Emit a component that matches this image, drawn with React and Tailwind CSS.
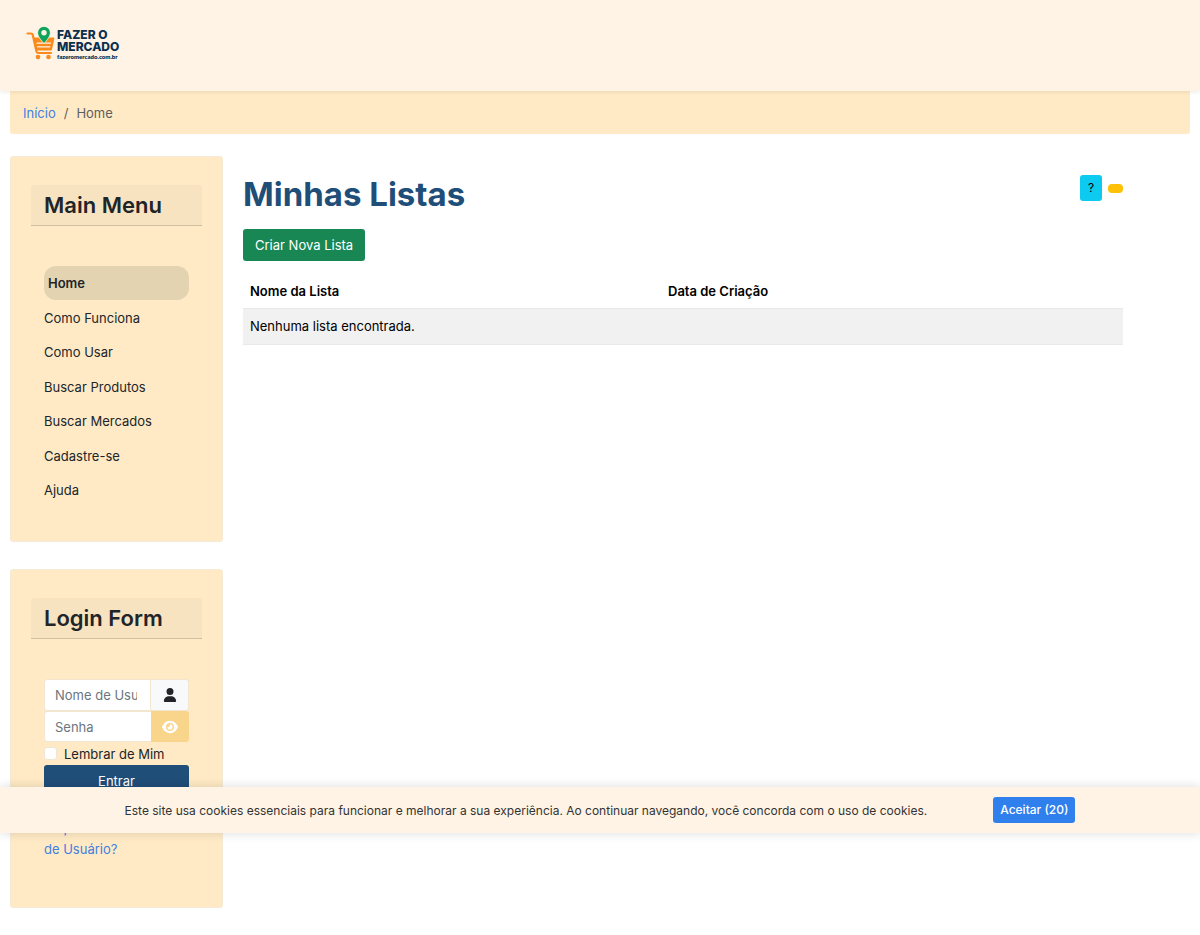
import { useState } from "react";
import { FaEye, FaUser } from "react-icons/fa6";

const menuItems = [
  "Home",
  "Como Funciona",
  "Como Usar",
  "Buscar Produtos",
  "Buscar Mercados",
  "Cadastre-se",
  "Ajuda",
];

function Logo() {
  return (
    <a href="#" className="flex items-center gap-[2px]" aria-label="Fazer o Mercado">
      <svg viewBox="0 0 29 36" className="h-9 w-[29px]" aria-hidden="true">
        {/* Carrinho */}
        <path d="M1.500 7.500h3.600c.9 0 1.400.5 1.600 1.300L10.500 25.500c.3 1 .9 1.500 1.800 1.500h12.700" fill="none" stroke="#f98b1d" strokeWidth="2.200" strokeLinecap="round" strokeLinejoin="round" />
        <path d="M7.500 12H28l-2.600 12H10.200z" fill="#f98b1d" stroke="#f98b1d" strokeLinejoin="round" />
        <path d="M11 17.200h13.500M11.500 20.800h12.300" stroke="#fff3e5" strokeWidth="1.200" strokeLinecap="round" />
        <circle cx="12" cy="31" r="2.300" fill="#f98b1d" />
        <circle cx="22.500" cy="31" r="2.300" fill="#f98b1d" />
        {/* Pin do mapa */}
        <path d="M18 .4a6.400 6.400 0 0 1 6.400 6.400c0 4.600-6.400 10.600-6.400 10.600S11.600 11.400 11.600 6.800A6.400 6.400 0 0 1 18 .4z" fill="#0ea45c" stroke="#fff3e5" strokeWidth=".8" />
        <circle cx="18" cy="6.800" r="2.700" fill="#fff3e5" />
      </svg>
      <span className="flex flex-col pt-[2px] font-extrabold text-[#0b2f4d]">
        <span className="text-[12px] leading-[12px]">FAZER O</span>
        <span className="text-[12px] leading-[12px]">MERCADO</span>
        <span className="font-['Lato',sans-serif] text-[6px] leading-[8px]">fazeromercado.com.br</span>
      </span>
    </a>
  );
}

function Card({ title, children }) {
  return (
    <section className="rounded-[3px] border border-[#f5ead6] bg-[#ffeac5] px-5 pt-7 pb-[34px]">
      <h3 className="rounded-t-[3px] border-b border-[#cfbf9f] bg-[#f7e3bf] px-[13px] py-1 text-[22px] leading-8 font-semibold text-[#212529]">
        {title}
      </h3>
      <div className="px-[13px] pt-10">{children}</div>
    </section>
  );
}

function MainMenu() {
  return (
    <Card title="Main Menu">
      <ul className="flex min-h-[241px] flex-col justify-between">
        {menuItems.map((item, i) => (
          <li key={item}>
            <a
              href="#"
              className={
                i === 0
                  ? "block rounded-xl bg-[#e4d3b1] px-1 py-[6px] font-semibold"
                  : "block py-[6px]"
              }
            >
              {item}
            </a>
          </li>
        ))}
      </ul>
    </Card>
  );
}

function LoginForm() {
  const [showPassword, setShowPassword] = useState(false);

  return (
    <Card title="Login Form">
      <form onSubmit={(e) => e.preventDefault()}>
        <div className="flex h-8">
          <label htmlFor="username" className="sr-only">Nome de Usuário</label>
          <input
            id="username"
            type="text"
            placeholder="Nome de Usuário"
            className="w-full min-w-0 rounded-l-[3px] border border-[#f3e6d0] bg-white pr-[13px] pl-[10px] placeholder:text-[#6c757d]"
          />
          <span className="flex w-[38px] shrink-0 items-center justify-center rounded-r-[3px] border border-l-0 border-[#f3e6d0] bg-[#f8f9fa]">
            <FaUser className="size-[14px]" />
          </span>
        </div>
        <div className="flex h-[31px]">
          <label htmlFor="password" className="sr-only">Senha</label>
          <input
            id="password"
            type={showPassword ? "text" : "password"}
            placeholder="Senha"
            className="w-full min-w-0 rounded-l-[3px] border border-r-0 border-[#f3e6d0] bg-white px-[10px] placeholder:text-[#6c757d]"
          />
          <button
            type="button"
            aria-label="Mostrar senha"
            onClick={() => setShowPassword(!showPassword)}
            className="flex w-[38px] shrink-0 items-center justify-center rounded-r-[3px] bg-[#f9d58c] text-white"
          >
            <FaEye className="size-4" />
          </button>
        </div>
        <div className="flex h-[23px] items-center gap-[7px]">
          <input
            id="remember"
            type="checkbox"
            className="size-[13px] appearance-none rounded-[3px] border border-[#f0e6d6] bg-white checked:bg-[#2f80ed]"
          />
          <label htmlFor="remember">Lembrar de Mim</label>
        </div>
        <button type="submit" className="h-8 w-full rounded-[3px] bg-[#1f4e79] text-white">
          Entrar
        </button>
      </form>
      <ul className="pb-[13px] leading-[21px] text-[#3f7fe0]">
        <li><a href="#">Esqueceu sua senha?</a></li>
        <li><a href="#">Esqueceu seu Nome de Usuário?</a></li>
      </ul>
    </Card>
  );
}

function Lists() {
  return (
    <main className="min-w-0 flex-1 pt-4 pr-[67px]">
      <div className="flex items-start justify-between">
        <h1 className="text-[33px] leading-[44px] font-bold text-[#1f4e79]">Minhas Listas</h1>
        <div className="flex items-center gap-[6px] pt-[3px]">
          <button className="h-[26px] w-[22px] rounded-[3px] bg-[#0dcaf0] text-[12px] text-black">?</button>
          <button aria-label="Avisos" className="h-[9px] w-[15px] rounded-[4px] bg-[#ffc107]" />
        </div>
      </div>
      <button className="mt-[13px] h-8 rounded-[3px] bg-[#198754] px-3 text-white">
        Criar Nova Lista
      </button>
      <table className="mt-3 w-full text-left text-black">
        <thead>
          <tr>
            <th className="w-[418px] px-[7px] pt-[7px] pb-[6px] font-semibold">Nome da Lista</th>
            <th className="px-[7px] pt-[7px] pb-[6px] font-semibold">Data de Criação</th>
          </tr>
        </thead>
        <tbody>
          <tr className="border-y border-[#e9e9e9] bg-[#f1f1f1]">
            <td colSpan={2} className="px-[7px] pt-[6px] pb-[7px]">Nenhuma lista encontrada.</td>
          </tr>
        </tbody>
      </table>
    </main>
  );
}

function CookieBanner({ onAccept }) {
  return (
    <div className="absolute inset-x-0 top-[787px] z-50 flex items-center justify-center gap-[66px] bg-[#fff3e5] py-[10px] text-[12px] text-[#333333] shadow-[0_0_10px_rgba(0,0,0,0.15)]">
      <p className="pt-[2px]">
        Este site usa cookies essenciais para funcionar e melhorar a sua experiência. Ao continuar navegando, você concorda com o uso de cookies.
      </p>
      <button
        onClick={onAccept}
        className="h-[26px] rounded-[3px] bg-[#2f80ed] px-[7px] font-medium text-white"
      >
        Aceitar (20)
      </button>
    </div>
  );
}

export default function App() {
  const [accepted, setAccepted] = useState(false);

  return (
    <div className="relative min-h-screen bg-white pb-[27px] font-['Inter',sans-serif] text-[13px] leading-[22px] text-[#212529]">
      <header className="relative bg-[#fff3e5] px-[26px] pt-[26px] pb-[29px] shadow-[0_2px_3px_rgba(0,0,0,0.06)]">
        <Logo />
      </header>
      <nav aria-label="breadcrumb" className="mx-[10px] rounded-b-[3px] bg-[#ffeac5] px-[13px] pt-[11px] pb-[10px]">
        <ol className="flex gap-2 text-[#5c5f62]">
          <li><a href="#" className="text-[#3f7fe0]">Início</a></li>
          <li>/</li>
          <li>Home</li>
        </ol>
      </nav>
      <div className="flex gap-5 px-[10px] pt-[22px]">
        <aside className="flex w-[213px] shrink-0 flex-col gap-[27px]">
          <MainMenu />
          <LoginForm />
        </aside>
        <Lists />
      </div>
      {!accepted && <CookieBanner onAccept={() => setAccepted(true)} />}
    </div>
  );
}
